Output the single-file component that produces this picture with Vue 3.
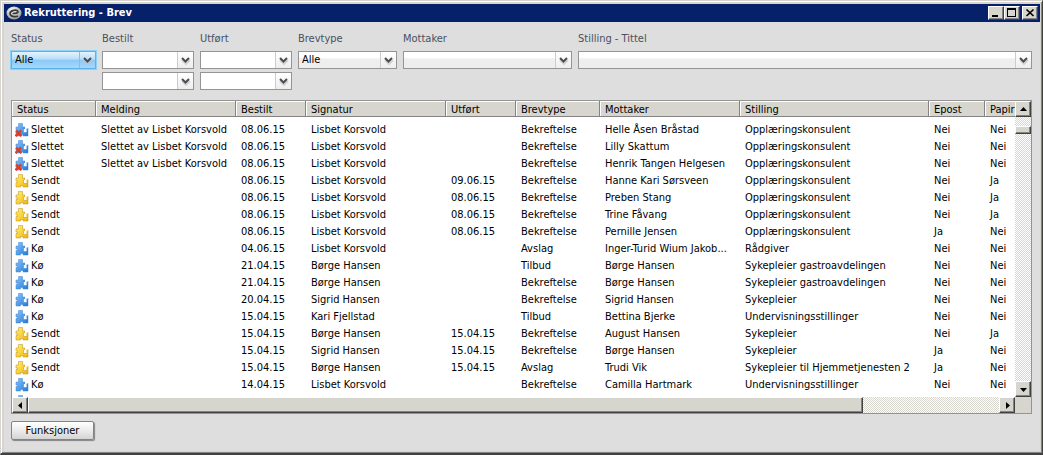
<script setup>
import { h } from 'vue'

const columns = [
  { name: 'Status', width: 84 },
  { name: 'Melding', width: 140 },
  { name: 'Bestilt', width: 70 },
  { name: 'Signatur', width: 140 },
  { name: 'Utført', width: 70 },
  { name: 'Brevtype', width: 84 },
  { name: 'Mottaker', width: 140 },
  { name: 'Stilling', width: 189 },
  { name: 'Epost', width: 56 },
  { name: 'Papir', width: 56 }
]

const deletedBy = 'Slettet av Lisbet Korsvold'
const rows = [
  ['Slettet', deletedBy, '08.06.15', 'Lisbet Korsvold', '', 'Bekreftelse', 'Helle Åsen Bråstad', 'Opplæringskonsulent', 'Nei', 'Nei'],
  ['Slettet', deletedBy, '08.06.15', 'Lisbet Korsvold', '', 'Bekreftelse', 'Lilly Skattum', 'Opplæringskonsulent', 'Nei', 'Nei'],
  ['Slettet', deletedBy, '08.06.15', 'Lisbet Korsvold', '', 'Bekreftelse', 'Henrik Tangen Helgesen', 'Opplæringskonsulent', 'Nei', 'Nei'],
  ['Sendt', '', '08.06.15', 'Lisbet Korsvold', '09.06.15', 'Bekreftelse', 'Hanne Kari Sørsveen', 'Opplæringskonsulent', 'Nei', 'Ja'],
  ['Sendt', '', '08.06.15', 'Lisbet Korsvold', '08.06.15', 'Bekreftelse', 'Preben Stang', 'Opplæringskonsulent', 'Nei', 'Ja'],
  ['Sendt', '', '08.06.15', 'Lisbet Korsvold', '08.06.15', 'Bekreftelse', 'Trine Fåvang', 'Opplæringskonsulent', 'Nei', 'Ja'],
  ['Sendt', '', '08.06.15', 'Lisbet Korsvold', '08.06.15', 'Bekreftelse', 'Pernille Jensen', 'Opplæringskonsulent', 'Ja', 'Nei'],
  ['Kø', '', '04.06.15', 'Lisbet Korsvold', '', 'Avslag', 'Inger-Turid Wium Jakob...', 'Rådgiver', 'Nei', 'Nei'],
  ['Kø', '', '21.04.15', 'Børge Hansen', '', 'Tilbud', 'Børge Hansen', 'Sykepleier gastroavdelingen', 'Nei', 'Nei'],
  ['Kø', '', '21.04.15', 'Børge Hansen', '', 'Bekreftelse', 'Børge Hansen', 'Sykepleier gastroavdelingen', 'Nei', 'Nei'],
  ['Kø', '', '20.04.15', 'Sigrid Hansen', '', 'Bekreftelse', 'Sigrid Hansen', 'Sykepleier', 'Nei', 'Nei'],
  ['Kø', '', '15.04.15', 'Kari Fjellstad', '', 'Tilbud', 'Bettina Bjerke', 'Undervisningsstillinger', 'Nei', 'Nei'],
  ['Sendt', '', '15.04.15', 'Børge Hansen', '15.04.15', 'Bekreftelse', 'August Hansen', 'Sykepleier', 'Nei', 'Ja'],
  ['Sendt', '', '15.04.15', 'Sigrid Hansen', '15.04.15', 'Bekreftelse', 'Børge Hansen', 'Sykepleier', 'Ja', 'Nei'],
  ['Sendt', '', '15.04.15', 'Børge Hansen', '15.04.15', 'Avslag', 'Trudi Vik', 'Sykepleier til Hjemmetjenesten 2', 'Ja', 'Nei'],
  ['Kø', '', '14.04.15', 'Lisbet Korsvold', '', 'Bekreftelse', 'Camilla Hartmark', 'Undervisningsstillinger', 'Nei', 'Nei'],
  ['Kø', '', '14.04.15', 'Lisbet Korsvold', '', 'Bekreftelse', 'Bettina Bjerke', 'Undervisningsstillinger', 'Nei', 'Nei']
]

const filters = [
  { id: 'status', label: 'Status', boxes: ['Alle'], kind: 'active' },
  { id: 'bestilt', label: 'Bestilt', boxes: ['', ''], kind: 'date' },
  { id: 'utfort', label: 'Utført', boxes: ['', ''], kind: 'date' },
  { id: 'brevtype', label: 'Brevtype', boxes: ['Alle'], kind: 'plain' },
  { id: 'mottaker', label: 'Mottaker', boxes: [''], kind: 'plain' },
  { id: 'stilling', label: 'Stilling - Tittel', boxes: [''], kind: 'plain' }
]

const arrows = {
  up: 'M0 5L3.5 1 7 5z',
  down: 'M0 2L3.5 6 7 2z',
  left: 'M5 0L1 3.5 5 7z',
  right: 'M2 0L6 3.5 2 7z'
}
const Arrow = (props) =>
  h('svg', { width: 7, height: 7, viewBox: '0 0 7 7', 'aria-hidden': 'true' }, [h('path', { d: arrows[props.dir] })])
Arrow.props = ['dir']
</script>

<template>
  <div class="window">
    <svg class="defs" width="0" height="0" aria-hidden="true">
      <defs>
        <linearGradient id="blue" x1="0" y1="0" x2="1" y2="1">
          <stop offset="0" stop-color="#8cc4fa" />
          <stop offset="1" stop-color="#1f78d8" />
        </linearGradient>
        <linearGradient id="yellow" x1="0" y1="0" x2="1" y2="1">
          <stop offset="0" stop-color="#fff27a" />
          <stop offset="1" stop-color="#f0b400" />
        </linearGradient>
        <radialGradient id="badge" cx=".4" cy=".3" r=".7">
          <stop offset="0" stop-color="#ffffff" />
          <stop offset="1" stop-color="#9a9a9a" />
        </radialGradient>
      </defs>
    </svg>

    <header class="titlebar">
      <svg width="16" height="14" viewBox="0 0 16 14" aria-hidden="true">
        <ellipse cx="8" cy="7" rx="7.5" ry="6.5" fill="url(#badge)" />
        <path d="M12 10C9 11.5 4 10.5 4 7.5 4 4.5 11 3 12 5.5 12.2 7 9.5 7.5 6.5 7.5" fill="none" stroke="#3a3a3a" stroke-width="1.7" />
      </svg>
      <h1>Rekruttering - Brev</h1>
      <div class="controls">
        <button type="button" aria-label="Minimer">
          <svg width="12" height="10" viewBox="0 0 12 10"><path d="M2 7h6v2H2z" /></svg>
        </button>
        <button type="button" aria-label="Maksimer">
          <svg width="12" height="10" viewBox="0 0 12 10"><path d="M1 0h9v9H1zM2 2v6h7V2z" fill-rule="evenodd" /></svg>
        </button>
        <button type="button" aria-label="Lukk" class="close">
          <svg width="12" height="10" viewBox="0 0 12 10"><path d="M2.5 1.5l7 6.5M9.5 1.5l-7 6.5" stroke="#000" stroke-width="1.7" /></svg>
        </button>
      </div>
    </header>

    <main>
      <form class="filters">
        <div v-for="f in filters" :key="f.id" class="field" :class="[f.id, f.kind]">
          <label :for="f.id">{{ f.label }}</label>
          <div v-for="(value, i) in f.boxes" :key="i" class="combo">
            <select :id="i ? f.id + '-til' : f.id" :aria-label="i ? f.label + ' til' : null">
              <option>{{ value }}</option>
            </select>
            <span class="drop">
              <svg width="11" height="9" viewBox="0 0 11 9" aria-hidden="true">
                <path d="M2 4l4 4 4-4" fill="none" stroke="#c4c4c4" stroke-opacity=".7" stroke-width="2" />
                <path d="M2 2l3.5 3.5L9 2" fill="none" stroke="#484c52" stroke-width="2" />
              </svg>
            </span>
          </div>
        </div>
      </form>

      <section class="list">
        <div class="viewport">
          <table>
            <colgroup>
              <col v-for="c in columns" :key="c.name" :style="{ width: c.width + 'px' }" />
            </colgroup>
            <thead>
              <tr>
                <th v-for="c in columns" :key="c.name" scope="col">{{ c.name }}</th>
              </tr>
            </thead>
            <tbody>
              <tr v-for="(row, r) in rows" :key="r">
                <td v-for="(cell, c) in row" :key="c">
                  <span v-if="c === 0" class="state">
                    <svg width="14" height="14" viewBox="0 0 14 14" aria-hidden="true">
                      <path
                        d="M3.5 .5H7.5V4H10V6H8.5V9.5H11.5V7.5H10.500V5H13V13H8V11.500H5.500V13H1V8.500H2.500V7H1V4H3.500z"
                        :fill="cell === 'Sendt' ? 'url(#yellow)' : 'url(#blue)'"
                        :stroke="cell === 'Sendt' ? '#c08a10' : '#3c84d0'"
                        stroke-width=".5"
                      />
                      <path d="M10 4h3v1.500h-1.500v3.500H9V6h1z" fill="#fff" />
                      <path v-if="cell === 'Slettet'" d="M1 7.500L6.500 13.200M6 7.500L.5 13.200" stroke="#e03c22" stroke-width="2.400" />
                    </svg>
                    {{ cell }}
                  </span>
                  <template v-else>{{ cell }}</template>
                </td>
              </tr>
            </tbody>
          </table>
        </div>
        <div class="scroll vertical">
          <button type="button" aria-label="Rull opp"><Arrow dir="up" /></button>
          <div class="track"><div class="thumb"></div></div>
          <button type="button" aria-label="Rull ned"><Arrow dir="down" /></button>
        </div>
        <div class="scroll horizontal">
          <button type="button" aria-label="Rull til venstre"><Arrow dir="left" /></button>
          <div class="track"><div class="thumb"></div></div>
          <button type="button" aria-label="Rull til høyre"><Arrow dir="right" /></button>
        </div>
        <div class="corner"></div>
      </section>

      <button type="button" class="action">Funksjoner</button>
    </main>
  </div>
</template>

<style>
body {
  background: #d6d3ce;
}
</style>

<style scoped>
.window,
.window * {
  box-sizing: border-box;
}
.window {
  display: flex;
  flex-direction: column;
  height: 100vh;
  padding: 3px 2px 2px 3px;
  border: 1px solid #d6d3ce;
  border-right-color: #424142;
  border-bottom: 2px solid #424142;
  background: #d6d6ce;
  box-shadow: inset 1px 1px #fff, inset -1px -1px #848284;
  color: #000;
  font-family: 'DejaVu Sans Condensed', 'DejaVu Sans', sans-serif;
  font-size: 11px;
  line-height: 14px;
}
.defs {
  position: absolute;
}
button,
select {
  margin: 0;
  padding: 0;
  color: inherit;
  font: inherit;
}
svg {
  display: block;
  flex: none;
}

.titlebar {
  display: flex;
  flex: none;
  align-items: center;
  gap: 2px;
  height: 18px;
  padding: 0 2px;
  background: #06206a;
  color: #fff;
}
h1 {
  flex: 1;
  margin: 0;
  font-size: 11px;
}
.controls {
  display: flex;
  color: #000;
}
.controls button {
  display: flex;
  justify-content: center;
  width: 16px;
  height: 14px;
  padding-top: 1px;
}
.controls .close {
  margin-left: 2px;
}
.controls button,
.scroll button,
.thumb {
  border: 1px solid;
  border-color: #fff #424142 #424142 #fff;
  background: #d6d6ce;
  box-shadow: inset -1px -1px #848284;
}

main {
  display: flex;
  flex: 1;
  flex-direction: column;
  align-items: flex-start;
  min-height: 0;
  padding: 10px 8px 11px 7px;
  background: #dedede;
}
.filters {
  display: flex;
  align-self: stretch;
  gap: 6px;
  margin-bottom: 10px;
}
.field {
  display: flex;
  flex-direction: column;
  gap: 3px;
  width: 92px;
}
.field.status {
  width: 85px;
}
.field.brevtype {
  width: 99px;
}
.field.mottaker {
  width: 169px;
}
.field.stilling {
  flex: 1;
}
.field label {
  margin-bottom: 2px;
  color: #4a5060;
}
.combo {
  display: flex;
  height: 18px;
  border: 1px solid #949494;
  background: #fff;
}
.plain .combo {
  background: linear-gradient(#fff 35%, #f6f6f6 35%, #eee 50%);
}
.active .combo {
  border-color: #58b4ee;
  background: linear-gradient(#e4f3fd, #b8def8 45%, #8cc8f6 50%, #a4d8fc);
  box-shadow: 0 0 0 1px #8cd2f8;
}
select {
  flex: 1;
  min-width: 0;
  padding-left: 3px;
  border: 0;
  outline: 0;
  appearance: none;
  background: transparent;
}
.drop {
  display: flex;
  align-items: center;
  justify-content: center;
  width: 16px;
  margin-left: -16px;
  border-left: 1px solid #ccc;
  background: linear-gradient(#fff, #eee);
  pointer-events: none;
}
.active .drop {
  border-color: #a0b4cc;
  background: none;
}

.list {
  display: grid;
  flex: 1;
  grid-template-rows: minmax(0, 1fr) 16px;
  grid-template-columns: minmax(0, 1fr) 16px;
  align-self: stretch;
  min-height: 0;
  border: 1px solid #949494;
  background: #fff;
}
.viewport {
  overflow: hidden;
}
table {
  width: 1029px;
  border-collapse: separate;
  border-spacing: 0;
  table-layout: fixed;
}
th {
  height: 16px;
  padding: 2px 0 0 5px;
  border: solid #848284;
  border-width: 0 1px 1px 0;
  background: #d6d6ce;
  box-shadow: inset 1px 1px #fff;
  font-weight: normal;
  line-height: 13px;
  text-align: left;
}
tbody::before {
  display: block;
  height: 4px;
  content: '';
}
td {
  height: 17px;
  padding: 0 0 0 5px;
  line-height: 17px;
  white-space: nowrap;
}
td:first-child {
  padding-left: 3px;
}
.state {
  display: flex;
  align-items: center;
  gap: 2px;
}

.scroll {
  display: flex;
}
.vertical {
  flex-direction: column;
}
.scroll button {
  display: flex;
  flex: none;
  align-items: center;
  justify-content: center;
  width: 16px;
  height: 16px;
}
.track {
  display: flex;
  flex: 1;
  background: repeating-conic-gradient(#d6d6ce 0 25%, #fff 0 50%) 0 0 / 2px 2px;
}
.vertical .track {
  flex-direction: column;
  padding-top: 9px;
}
.vertical .thumb {
  height: 8px;
}
.horizontal .thumb {
  width: 86%;
}
.corner {
  background: #d6d6ce;
}
.action {
  width: 83px;
  height: 19px;
  margin-top: 7px;
  border: 1px solid #848484;
  border-radius: 2px;
  background: linear-gradient(#fff, #eee 45%, #d4d4d4);
  box-shadow: 1px 1px 1px #848484;
}
</style>
